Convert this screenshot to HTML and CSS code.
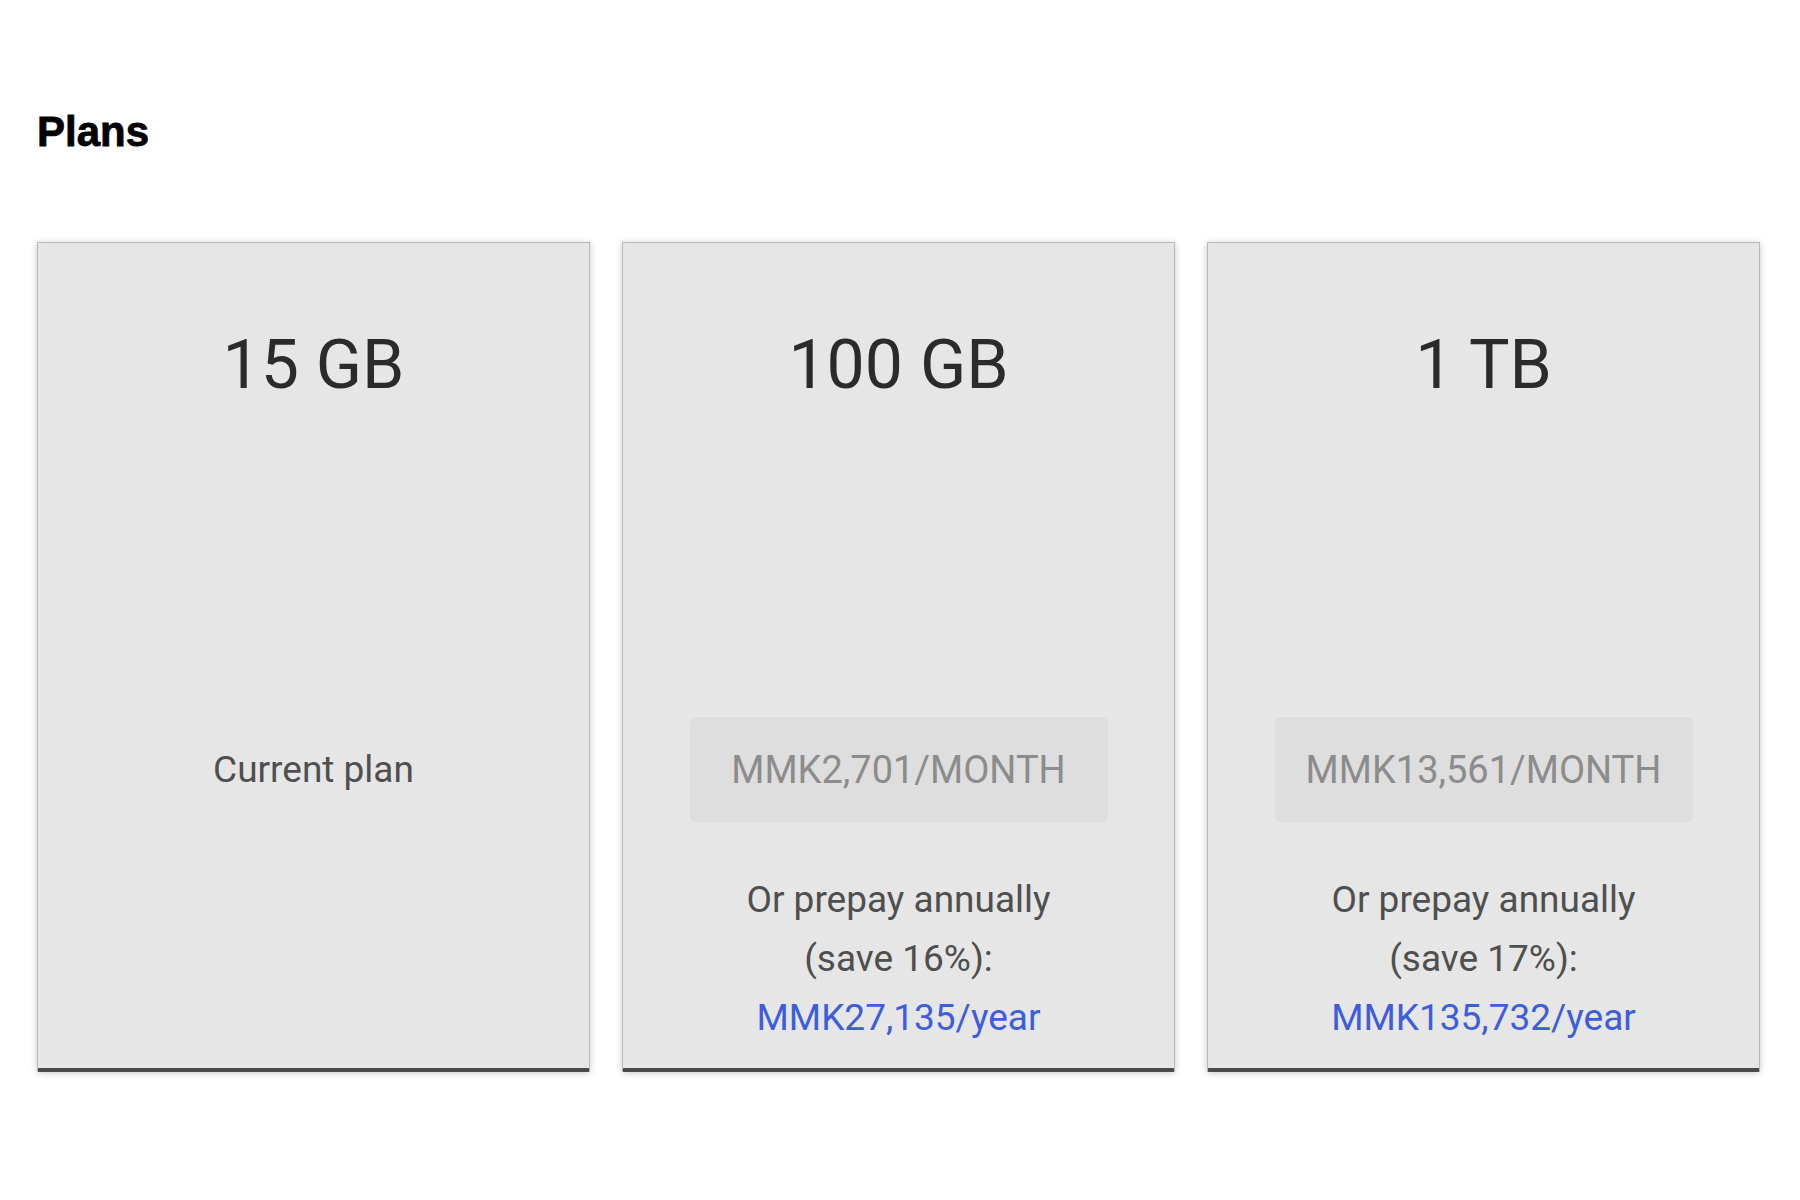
FILE: index.html
```html
<!doctype html>
<html>
<head>
<meta charset="utf-8">
<title>Plans</title>
<link rel="stylesheet" href="styles.css">
</head>
<body>
	<div class="page">
	<h1 class="title">Plans</h1>
	<div class="plans">
		<div class="plan">
			<div class="size">15 GB</div>
			<div class="current">Current plan</div>
		</div>
		<div class="plan">
			<div class="size">100 GB</div>
			<div class="price">MMK2,701/MONTH</div>
			<div class="yearly">Or prepay annually<br>(save 16%):<br><a href="#">MMK27,135/year</a></div>
		</div>
		<div class="plan">
			<div class="size">1 TB</div>
			<div class="price">MMK13,561/MONTH</div>
			<div class="yearly">Or prepay annually<br>(save 17%):<br><a href="#">MMK135,732/year</a></div>
		</div>
	</div>
	</div>
</body>
</html>
```

FILE: styles.css
```css
body{
	margin:0;
	background:#fff;
	font-family:Roboto, "Liberation Sans", sans-serif;
}
.page{
	padding:107px 40px 120px 37px;
}
.title{
	margin:0;
	font-family:"Liberation Sans", Arial, sans-serif;
	font-size:42px;
	line-height:50px;
	font-weight:bold;
	color:#000;
	-webkit-text-stroke:0.8px #000;
}
.plans{
	display:grid;
	grid-template-columns:repeat(3, 553px);
	gap:32px;
	margin-top:85px;
}
.plan{
	box-sizing:border-box;
	height:830px;
	background:#e6e6e6;
	border:1px solid #b9b9b9;
	border-bottom:4px solid #4a4a4a;
	border-radius:0 0 2px 2px;
	box-shadow:0 1px 7px rgba(0,0,0,0.22);
	display:flex;
	flex-direction:column;
	align-items:center;
	padding-top:82px;
	text-align:center;
}
.size{
	font-size:68px;
	line-height:80px;
	color:#2b2b2b;
	margin-bottom:312px;
}
.current{
	font-size:37px;
	line-height:105px;
	color:#4f4f4f;
}
.price{
	width:418px;
	height:105px;
	background:#dedede;
	border-radius:6px;
	display:flex;
	align-items:center;
	justify-content:center;
	font-size:38px;
	color:#8c8c8c;
}
.yearly{
	margin-top:48px;
	font-size:37px;
	line-height:59px;
	color:#4f4f4f;
}
.yearly a{
	color:#3d5ddb;
	text-decoration:none;
}
```
